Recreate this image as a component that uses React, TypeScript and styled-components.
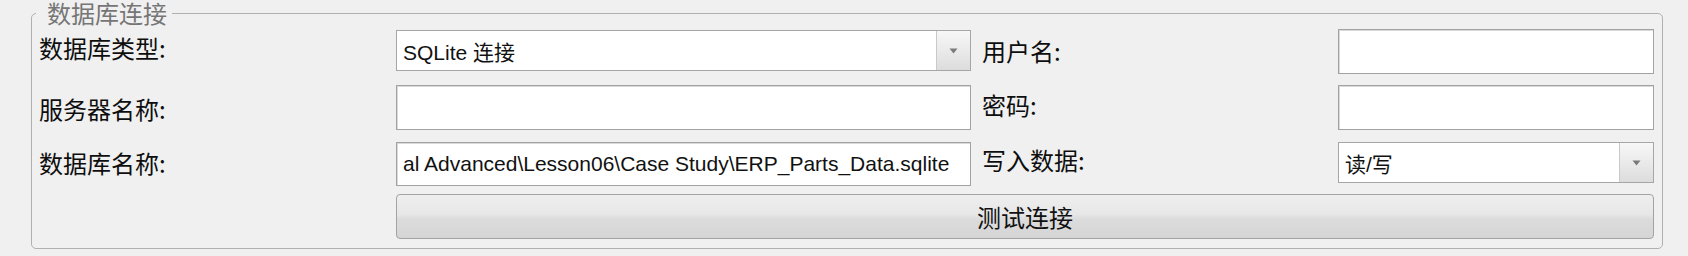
import React from 'react';
import styled, { createGlobalStyle } from 'styled-components';

const GlobalStyle = createGlobalStyle`
  html, body { margin: 0; padding: 0; background: #f0f0f0; }
  body { font-family: "Noto Sans CJK SC", "Liberation Sans", sans-serif; }
`;

const Page = styled.div`
  width: 1688px;
  height: 256px;
  box-sizing: border-box;
  padding: 2px 25px 0 31px;
  background: #f0f0f0;
`;

const Group = styled.fieldset`
  margin: 0;
  box-sizing: border-box;
  min-inline-size: 0;
  border: 1px solid #b0b0b0;
  border-radius: 5px;
  padding: 5px 8px 9px 7px;
`;

const Legend = styled.legend`
  margin-left: -3px;
  padding: 0 5px 0 11px;
  font-family: "Noto Sans CJK SC", sans-serif;
  font-size: 24px;
  line-height: 22px;
  color: #767676;
`;

const Grid = styled.div`
  display: grid;
  grid-template-columns: 357px 575px 367px 1fr;
  grid-template-rows: 44px 45px 44px 41px;
  row-gap: 12px;
`;

const Label = styled.div<{ $right?: boolean; $shift?: number }>`
  align-self: center;
  padding-left: ${(p) => (p.$right ? 11 : 0)}px;
  margin-top: ${(p) => (p.$shift ?? 0) * 2}px;
  font-family: "Noto Sans CJK SC", sans-serif;
  font-size: 24px;
  line-height: 28px;
  color: #0e0e0e;
  white-space: nowrap;
`;

const TextBox = styled.div<{ $h?: number }>`
  box-sizing: border-box;
  height: ${(p) => p.$h ?? 44}px;
  align-self: start;
  display: flex;
  align-items: center;
  padding: 0 6px;
  background: #fff;
  border: 1px solid #a2a2a2;
  box-shadow: inset 1px 1px 0 #dadada;
  font-family: "Liberation Sans", "Noto Sans CJK SC", sans-serif;
  font-size: 21px;
  color: #111;
  white-space: nowrap;
  overflow: hidden;
`;

const Combo = styled.div<{ $mt?: number }>`
  box-sizing: border-box;
  height: 41px;
  margin-top: ${(p) => p.$mt ?? 0}px;
  align-self: start;
  display: flex;
  background: #fff;
  border: 1px solid #a6a6a6;
`;

const ComboText = styled.div`
  flex: 1;
  display: flex;
  align-items: center;
  padding: 0 6px;
  font-family: "Liberation Sans", "Noto Sans CJK SC", sans-serif;
  font-size: 21px;
  color: #111;
  white-space: nowrap;
  overflow: hidden;
`;

const Arrow = styled.div`
  width: 33px;
  display: flex;
  align-items: center;
  justify-content: center;
  border-left: 1px solid #c9c9c9;
  background: linear-gradient(#f7f7f7, #eaeaea 50%, #dcdcdc);
`;

const Button = styled.button`
  grid-column: 2 / 5;
  height: 45px;
  margin-top: -4px;
  box-sizing: border-box;
  border: 1px solid #a3a3a3;
  border-radius: 4px;
  background: linear-gradient(#eeeeee 0%, #e7e7e7 45%, #dcdcdc 55%, #d5d5d5 100%);
  font-family: "Noto Sans CJK SC", sans-serif;
  font-size: 24px;
  color: #111;
  padding: 0;
`;

const ArrowIcon = () => (
  <svg width="9" height="6" viewBox="0 0 9 6">
    <path d="M0.5 0.5 L8.5 0.5 L4.5 5.5 Z" fill="#7a7a7a" />
  </svg>
);

export default function App() {
  return (
    <>
      <GlobalStyle />
      <Page>
        <Group>
          <Legend>数据库连接</Legend>
          <Grid>
            <Label $shift={-3}>数据库类型:</Label>
            <Combo $mt={1}>
              <ComboText>SQLite 连接</ComboText>
              <Arrow>
                <ArrowIcon />
              </Arrow>
            </Combo>
            <Label $right $shift={0}>用户名:</Label>
            <TextBox $h={45} />

            <Label $shift={1}>服务器名称:</Label>
            <TextBox $h={45} />
            <Label $right $shift={-3}>密码:</Label>
            <TextBox $h={45} />

            <Label $shift={-1}>数据库名称:</Label>
            <TextBox>al Advanced\Lesson06\Case Study\ERP_Parts_Data.sqlite</TextBox>
            <Label $right $shift={-4}>写入数据:</Label>
            <Combo>
              <ComboText>读/写</ComboText>
              <Arrow>
                <ArrowIcon />
              </Arrow>
            </Combo>

            <Button>测试连接</Button>
          </Grid>
        </Group>
      </Page>
    </>
  );
}
